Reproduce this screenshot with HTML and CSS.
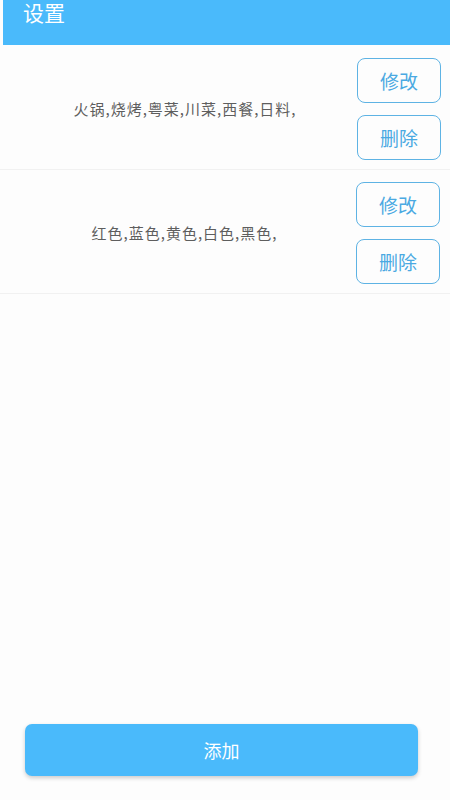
FILE: index.html
```html
<!DOCTYPE html>
<html lang="zh">
<head>
<meta charset="utf-8">
<link rel="stylesheet" href="styles.css">
</head>
<body>
<div class="app">
  <header class="header"><span class="title">设置</span></header>
  <div class="list">
    <div class="row">
      <div class="text">火锅,烧烤,粤菜,川菜,西餐,日料,</div>
      <div class="btns">
        <div class="btn">修改</div>
        <div class="btn">删除</div>
      </div>
    </div>
    <div class="row row2">
      <div class="text">红色,蓝色,黄色,白色,黑色,</div>
      <div class="btns">
        <div class="btn">修改</div>
        <div class="btn">删除</div>
      </div>
    </div>
  </div>
  <div class="spacer"></div>
  <div class="footer"><div class="add">添加</div></div>
</div>
</body>
</html>
```
FILE: styles.css
```css
html, body {
  margin: 0;
  padding: 0;
  background: #fdfdfd;
  font-family: "Noto Sans CJK SC", "Noto Sans", sans-serif;
}
.app {
  width: 450px;
  height: 800px;
  display: flex;
  flex-direction: column;
}
.header {
  height: 45px;
  margin-left: 3px;
  background: #4abafb;
  box-sizing: border-box;
  padding-left: 20px;
  display: flex;
  align-items: flex-start;
}
.title {
  color: #fff;
  font-size: 21px;
  line-height: 25px;
}
.list {
  display: flex;
  flex-direction: column;
}
.row {
  display: flex;
  align-items: center;
  border-bottom: 1px solid #f1f1f1;
  padding: 13px 9px 9px 0;
}
.row2 {
  padding: 12px 10px 9px 0;
}
.text {
  flex: 1;
  text-align: center;
  padding-left: 13px;
  color: #5e5e5e;
  font-size: 15px;
  line-height: 20px;
  letter-spacing: 1px;
}
.btns {
  display: flex;
  flex-direction: column;
  gap: 12px;
}
.btn {
  width: 84px;
  height: 45px;
  box-sizing: border-box;
  border: 1.5px solid #5eb3e4;
  border-radius: 8px;
  color: #4aa9e2;
  font-size: 19px;
  display: flex;
  align-items: center;
  justify-content: center;
}
.spacer {
  flex: 1;
}
.footer {
  padding: 0 32px 24px 25px;
}
.add {
  height: 52px;
  background: #4abafb;
  border-radius: 7px;
  box-shadow: 0 2px 4px rgba(0,0,0,0.2);
  color: #fff;
  font-size: 18px;
  display: flex;
  align-items: center;
  justify-content: center;
}
```
